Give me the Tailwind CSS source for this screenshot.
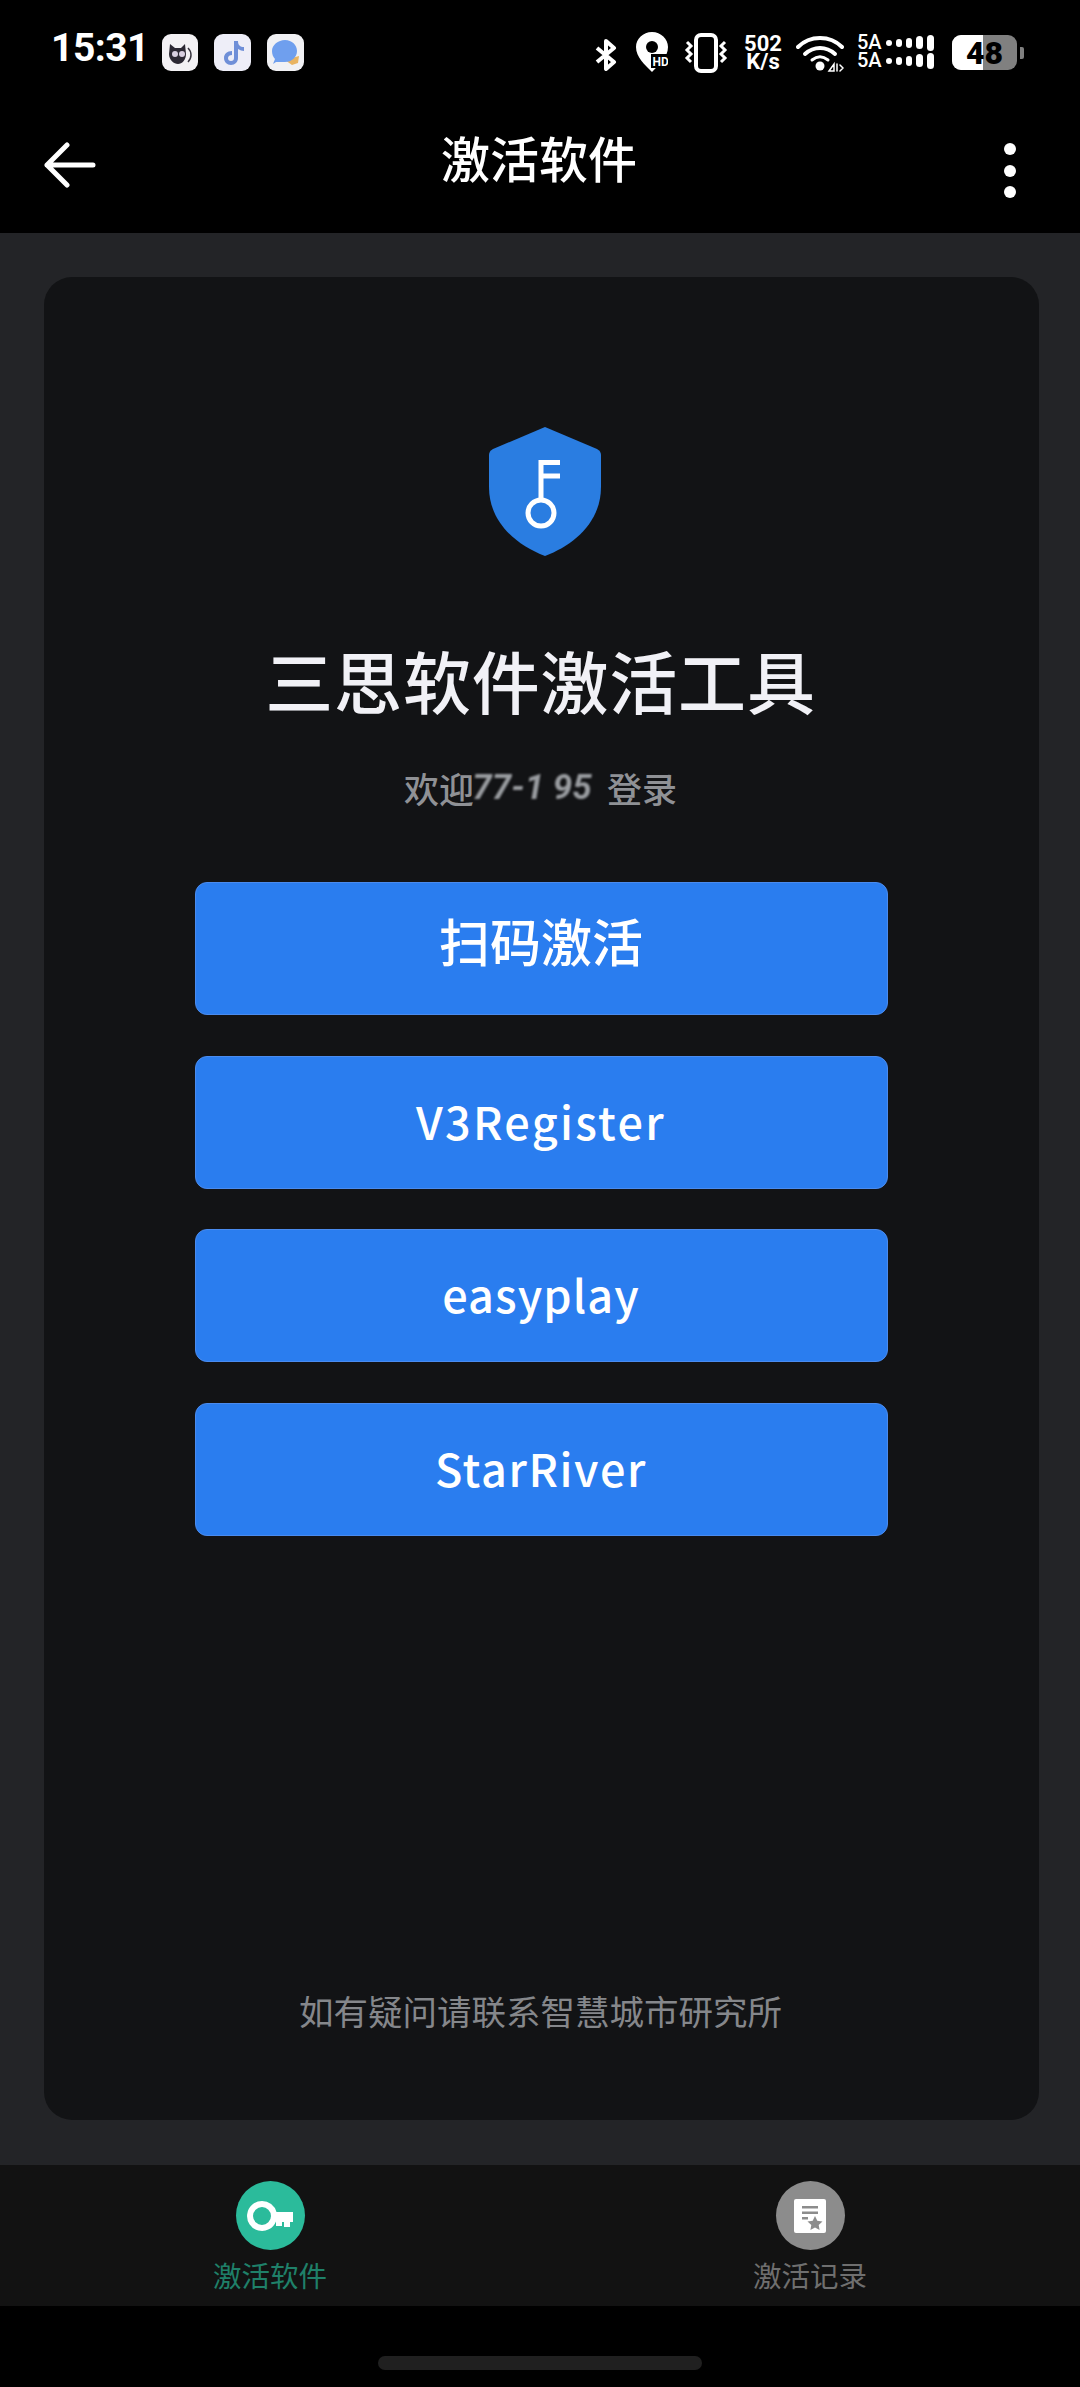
<!DOCTYPE html>
<html lang="zh-CN">
<head>
    <meta charset="UTF-8">
    <meta name="viewport" content="width=device-width, initial-scale=1.0">
    <title>激活软件</title>
    <script src="https://cdn.jsdelivr.net/npm/@tailwindcss/browser@4"></script>
</head>
<body class="bg-black">
<div class="w-[1080px] h-[2387px] flex flex-col bg-black text-white overflow-hidden font-['Noto_Sans_CJK_SC',sans-serif]">

    <!-- status bar -->
    <div class="h-[104px] shrink-0 pt-[31px] pl-[51px] flex items-start">
        <span class="w-[97px] h-[34px] flex items-center font-['Roboto',sans-serif] font-bold text-[39px] leading-none tracking-[-0.5px]">15:31</span>
        <div class="ml-[14px] mt-[3px] flex gap-[16px]">
            <div class="w-[36px] h-[37px] rounded-[9px] bg-[#f3f1f4] flex items-center justify-center">
                <svg width="28" height="30" viewBox="0 0 28 30"><path d="M4 6l5 4h6l4-4 1 10c0 6-4 10-8 10s-9-4-9-10z" fill="#2c2833"/><circle cx="9" cy="16" r="3" fill="#d8cfe0"/><circle cx="16" cy="16" r="3" fill="#d8cfe0"/><path d="M22 10c4 4 4 10 0 14" stroke="#3a3640" stroke-width="1.5" fill="none"/></svg>
            </div>
            <div class="w-[37px] h-[37px] rounded-[9px] bg-[#eeeef8] flex items-center justify-center">
                <svg width="24" height="26" viewBox="0 0 24 26"><path d="M13 1h4c0 4 2 6 6 6v4c-2 0-4-1-6-2v9c0 4-3 7-7 7s-7-3-7-7 3-7 8-7v4c-2 0-4 1-4 3s1 3 3 3 3-1 3-3z" fill="#6f8fd8"/></svg>
            </div>
            <div class="w-[37px] h-[37px] rounded-[9px] bg-[#f1f1f4] flex items-center justify-center">
                <svg width="30" height="30" viewBox="0 0 30 30"><path d="M14 22l7 5 6-2 1-7z" fill="#e9b461"/><path d="M14 2c7 0 12 5 12 11s-5 11-12 11H5l-3 2 2-5C2 19 1 16 1 13 1 7 7 2 14 2z" fill="#6f9fee"/></svg>
            </div>
        </div>

        <div class="ml-auto flex items-start h-[40px] relative w-[484px]">
            <div class="absolute left-[-2px] top-[8px]">
                <svg width="24" height="32" viewBox="0 0 24 32" fill="none" stroke="#fff" stroke-width="4" stroke-linejoin="round"><path d="M3 9l17 14-8 7V2l8 7L3 23"/></svg>
            </div>
            <div class="absolute left-[40px] top-[1px]">
                <svg width="32" height="40" viewBox="0 0 32 40"><path d="M16 0c9 0 16 7 16 15 0 10-9 18-16 25C9 33 0 25 0 15 0 7 7 0 16 0z" fill="#fff"/><circle cx="16" cy="15" r="6" fill="#000"/><rect x="15" y="22" width="17" height="14" fill="#000"/><text x="16.500" y="34" font-size="12" font-weight="700" fill="#fff" font-family="Roboto, sans-serif">HD</text></svg>
            </div>
            <div class="absolute left-[88px] top-[2px]">
                <svg width="44" height="40" viewBox="0 0 44 40" fill="none" stroke="#fff"><rect x="12" y="2" width="20" height="36" rx="5" stroke-width="4"/><path d="M3 9l4 4-4 4 4 4-4 4 4 4" stroke-width="3"/><path d="M41 9l-4 4 4 4-4 4 4 4-4 4" stroke-width="3"/></svg>
            </div>
            <div class="absolute left-[146px] top-[4px] w-[42px] flex flex-col items-center font-['Roboto',sans-serif] font-bold text-[22px] leading-[18px]">
                <span>502</span><span>K/s</span>
            </div>
            <div class="absolute left-[200px] top-[4px]">
                <svg width="48" height="37" viewBox="0 0 48 37" fill="none" stroke="#fff" stroke-linecap="round"><path d="M2 12C14 0 34 0 46 12" stroke-width="4"/><path d="M9 19c9-8 21-8 30 0" stroke-width="4"/><path d="M16 25c5-4 11-4 16 0" stroke-width="3"/><circle cx="24" cy="31" r="4.500" fill="#fff" stroke="none"/><path d="M33 36l5-7v7zM41 29v7M44 30l3 3-3 3" stroke-width="1.500"/></svg>
            </div>
            <div class="absolute left-[261px] top-[3px] w-[82px] flex flex-col gap-[1px] font-['Roboto',sans-serif] font-medium text-[20px] leading-[17px]">
                <div class="flex items-center"><span class="w-[29px]">5A</span><div class="flex items-center gap-[4px]"><i class="w-[6px] h-[6px] rounded-full bg-white"></i><i class="w-[6px] h-[8px] rounded-full bg-white"></i><i class="w-[6px] h-[10px] rounded-full bg-white"></i><i class="w-[7px] h-[13px] rounded-full bg-white"></i><i class="w-[7px] h-[16px] rounded-full bg-white"></i></div></div>
                <div class="flex items-center"><span class="w-[29px]">5A</span><div class="flex items-center gap-[4px]"><i class="w-[6px] h-[6px] rounded-full bg-white"></i><i class="w-[6px] h-[8px] rounded-full bg-white"></i><i class="w-[6px] h-[10px] rounded-full bg-white"></i><i class="w-[7px] h-[13px] rounded-full bg-white"></i><i class="w-[7px] h-[16px] rounded-full bg-white"></i></div></div>
            </div>
            <div class="absolute left-[356px] top-[4px] flex items-center">
                <div class="relative w-[65px] h-[35px] rounded-[9px] overflow-hidden bg-[#808080]">
                    <div class="absolute inset-y-0 left-0 w-[31px] bg-white"></div>
                    <span class="absolute inset-0 flex items-center justify-center font-['Roboto',sans-serif] font-black text-[32px] leading-none text-black">48</span>
                </div>
                <div class="ml-[3px] w-[4px] h-[12px] rounded-r-[2px] bg-[#808080]"></div>
            </div>
        </div>
    </div>

    <!-- app bar -->
    <div class="h-[129px] shrink-0 relative flex items-center justify-center">
        <svg class="absolute left-[44px] top-[38px]" width="52" height="46" viewBox="0 0 52 46" fill="none" stroke="#fff" stroke-width="5" stroke-linecap="round" stroke-linejoin="round"><path d="M49 23H3M23 3L3 23l20 20"/></svg>
        <span class="text-[49px] leading-none font-medium -mt-[25px] -ml-[2px]">激活软件</span>
        <div class="absolute left-[1004px] top-[39px] flex flex-col gap-[9.5px]">
            <i class="w-[12px] h-[12px] rounded-full bg-white"></i>
            <i class="w-[12px] h-[12px] rounded-full bg-white"></i>
            <i class="w-[12px] h-[12px] rounded-full bg-white"></i>
        </div>
    </div>

    <!-- main -->
    <div class="flex-1 bg-[#232427] pt-[44px] pb-[45px] pl-[44px] pr-[41px] flex">
        <div class="flex-1 rounded-[28px] bg-[#121315] flex flex-col items-center pt-[150px] pb-[85px]">
            <svg width="112" height="129" viewBox="0 0 112 129" class="ml-[6px]">
                <path d="M56 0L108 22Q112 24 112 28V60C112 95 85 118 56 129C27 118 0 95 0 60V28Q0 24 4 22Z" fill="#2a7de1"/>
                <g fill="none" stroke="#fff" stroke-width="5"><circle cx="52" cy="86" r="13"/><path d="M52 73V35.500H71M52 49H71"/></g>
            </svg>
            <h1 class="mt-[84px] text-[68px] leading-[80px] font-medium text-[#f1f1f6] -ml-[2px] tracking-[0.8px]">三思软件激活工具</h1>
            <p class="mt-[43px] h-[50px] text-[35px] leading-[50px] font-medium text-[#8f9195] flex whitespace-nowrap -ml-[2px]">
                <span>欢迎</span>
                <span class="w-[124px] -ml-[4px] text-center italic font-bold text-[#9a9da1] blur-[1px] font-['Roboto',sans-serif]">77-1 95</span>
                <span class="ml-[13px]">登录</span>
            </p>
            <div class="mt-[69px] w-[693px] -ml-[1px] flex flex-col gap-[40.5px]">
                <button class="h-[133px] rounded-[12px] border border-[#4a8bee] bg-[#2a7def] text-[51px] leading-none font-medium text-white pb-[16px]">扫码激活</button>
                <button class="h-[133px] rounded-[12px] border border-[#4a8bee] bg-[#2a7def] text-[45px] leading-none font-medium text-white tracking-[2.3px] pb-[4px]">V3Register</button>
                <button class="h-[133px] rounded-[12px] border border-[#4a8bee] bg-[#2a7def] text-[45px] leading-none font-medium text-white tracking-[1.1px] pb-[4px]">easyplay</button>
                <button class="h-[133px] rounded-[12px] border border-[#4a8bee] bg-[#2a7def] text-[45px] leading-none font-medium text-white tracking-[1.6px] pb-[4px]">StarRiver</button>
            </div>
            <p class="mt-auto text-[34.5px] leading-[50px] text-[#85878b] -ml-[2px]">如有疑问请联系智慧城市研究所</p>
        </div>
    </div>

    <!-- tabs -->
    <div class="h-[141px] shrink-0 bg-[#121212] flex pt-[16px]">
        <div class="w-[541px] flex flex-col items-center">
            <div class="w-[69px] h-[69px] rounded-full bg-[#2bbb9b] flex items-center justify-center">
                <svg width="48" height="34" viewBox="0 0 48 34"><path fill-rule="evenodd" d="M16 2a15 15 0 0 1 14.500 11H47v10h-3v5h-6v-5h-2v4h-6v-4.500A15 15 0 1 1 16 2zm0 6a9 9 0 1 0 0 18 9 9 0 0 0 0-18z" fill="#fff"/></svg>
            </div>
            <span class="mt-[7px] text-[28.5px] leading-[36px] text-[#1f8069]">激活软件</span>
        </div>
        <div class="w-[541px] flex flex-col items-center">
            <div class="w-[69px] h-[69px] rounded-full bg-[#8c8c8c] flex items-center justify-center">
                <svg width="32" height="34" viewBox="0 0 32 34"><rect x="0" y="0" width="32" height="34" rx="2" fill="#fff"/><path d="M8 7h16v2.500H8zM8 12.500h16V15H8zM8 18h6v2.500H8z" fill="#8c8c8c"/><path d="M21 17l2.300 4.700 5.200.7-3.800 3.600.9 5.100-4.600-2.500-4.600 2.500.9-5.100-3.800-3.600 5.200-.7z" fill="#8c8c8c"/></svg>
            </div>
            <span class="mt-[7px] text-[28.5px] leading-[36px] text-[#6f6f6f]">激活记录</span>
        </div>
    </div>

    <!-- home indicator -->
    <div class="h-[81px] shrink-0 flex justify-center pt-[50px]">
        <div class="w-[324px] h-[14px] rounded-[7px] bg-[#202020]"></div>
    </div>
</div>
</body>
</html>
